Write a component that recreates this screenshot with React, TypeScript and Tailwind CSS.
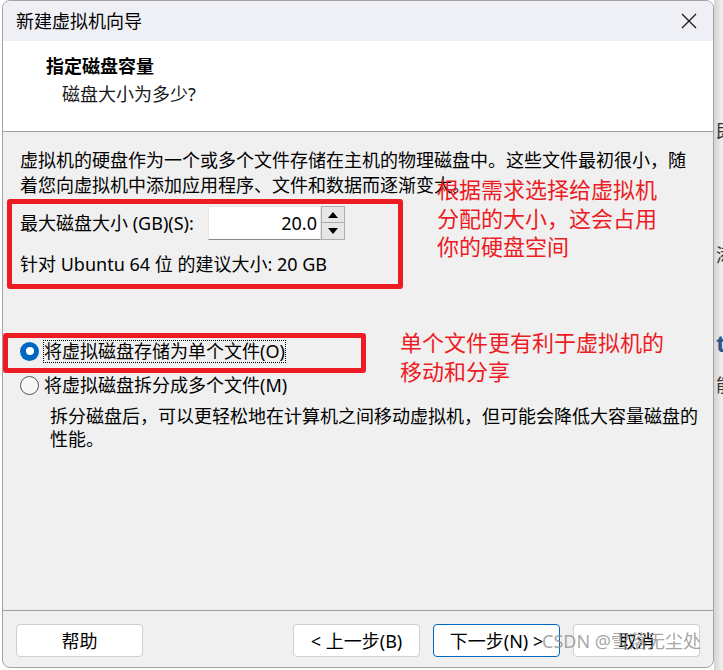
import React from 'react';

const WizardButton = ({ label, primary }: { label: string; primary?: boolean }) => (
  <button
    className={
      primary
        ? 'w-[127px] h-[33px] rounded-[4px] bg-white border border-[#0067c0] text-[18px] leading-[24px] text-black'
        : 'w-[127px] h-[33px] rounded-[4px] bg-white border border-[#cfcfcf] text-[18px] leading-[24px] text-black'
    }
  >
    {label}
  </button>
);

const App = () => {
  return (
    <div className="w-[723px] h-[670px] bg-white flex overflow-hidden font-['Noto_Sans','Noto_Sans_CJK_SC',sans-serif] text-black">
      <div className="w-[2px] shrink-0" />

      {/* dialog */}
      <div className="w-[712px] h-[668px] shrink-0 border border-[#a3a3a3] rounded-[8px] overflow-hidden flex flex-col bg-[#f0f0f0]">
        {/* title bar */}
        <div className="h-[40px] shrink-0 bg-[#eff0f5] flex items-center justify-between pl-[13px] pr-[16px]">
          <span className="text-[18px] leading-[24px]">新建虚拟机向导</span>
          <svg width="16" height="16" viewBox="0 0 16 16">
            <path d="M1 1 L15 15 M15 1 L1 15" stroke="#1a1a1a" strokeWidth="1.3" fill="none" />
          </svg>
        </div>

        {/* header */}
        <div className="h-[91px] shrink-0 bg-white border-b border-[#a0a0a0] pl-[43px] pt-[13px]">
          <div className="text-[18px] leading-[24px] font-bold">指定磁盘容量</div>
          <div className="text-[18px] leading-[24px] mt-[4px] ml-[16px] text-[#1a1a1a]">磁盘大小为多少?</div>
        </div>

        {/* body */}
        <div className="flex-1 pl-[17px] pt-[16px] text-[18px]">
          <p className="leading-[25px] whitespace-nowrap">
            虚拟机的硬盘作为一个或多个文件存储在主机的物理磁盘中。这些文件最初很小，随
            <br />
            着您向虚拟机中添加应用程序、文件和数据而逐渐变大。
          </p>

          <div className="relative mt-[8px] w-[380px]">
            <div className="absolute left-[-13px] top-[-7px] w-[396px] h-[90px] border-[5px] border-[#ed1c24] rounded-[3px]" />
            <div className="absolute left-[417px] top-[-32px] w-[260px] text-[22px] leading-[28.5px] text-[#ed1c24] font-['Noto_Sans_CJK_SC',sans-serif] whitespace-nowrap">
              根据需求选择给虚拟机
              <br />
              分配的大小，这会占用
              <br />
              你的硬盘空间
            </div>

            <div className="flex items-center h-[34px]">
              <span className="w-[188px] leading-[24px]">最大磁盘大小 (GB)(S):</span>
              <div className="w-[113px] h-[34px] bg-white border border-[#e6e6e6] border-b-[#8a8a8a] flex items-center justify-end pr-[3px] leading-[24px]">
                20.0
              </div>
              <div className="w-[24px] h-[34px] flex flex-col">
                <div className="h-[17px] bg-[#e6e6e6] border border-[#adadad] flex items-center justify-center">
                  <svg width="10" height="6" viewBox="0 0 10 6">
                    <path d="M5 0 L10 6 L0 6 Z" fill="#000" />
                  </svg>
                </div>
                <div className="h-[17px] bg-[#e6e6e6] border border-t-0 border-[#adadad] flex items-center justify-center">
                  <svg width="10" height="6" viewBox="0 0 10 6">
                    <path d="M0 0 L10 0 L5 6 Z" fill="#000" />
                  </svg>
                </div>
              </div>
            </div>
            <div className="mt-[12px] leading-[24px] whitespace-nowrap">针对 Ubuntu 64 位 的建议大小: 20 GB</div>
          </div>

          <div className="relative mt-[63px] flex items-center h-[24px]">
            <div className="absolute left-[-17px] top-[-6px] w-[363px] h-[40px] border-[5px] border-[#ed1c24] rounded-[3px]" />
            <div className="absolute left-[380px] top-[-12px] text-[22px] leading-[29px] text-[#ed1c24] font-['Noto_Sans_CJK_SC',sans-serif] whitespace-nowrap">
              单个文件更有利于虚拟机的
              <br />
              移动和分享
            </div>
            <div className="w-[19px] h-[19px] rounded-full bg-[#0067c0] flex items-center justify-center">
              <div className="w-[8px] h-[8px] rounded-full bg-white" />
            </div>
            <span className="ml-[5px] leading-[21px] outline outline-1 outline-dotted outline-black">将虚拟磁盘存储为单个文件(O)</span>
          </div>

          <div className="mt-[10px] flex items-center h-[24px]">
            <div className="w-[19px] h-[19px] rounded-full bg-[#f7f7f7] border border-[#555555]" />
            <span className="ml-[5px] leading-[24px]">将虚拟磁盘拆分成多个文件(M)</span>
          </div>

          <p className="mt-[8px] ml-[30px] leading-[23px] whitespace-nowrap">
            拆分磁盘后，可以更轻松地在计算机之间移动虚拟机，但可能会降低大容量磁盘的
            <br />
            性能。
          </p>
        </div>

        {/* footer */}
        <div className="relative h-[57px] shrink-0 border-t border-[#a0a0a0] pt-[13px] pl-[13px] pr-[13px] flex justify-between">
          <WizardButton label="帮助" />
          <div className="flex gap-[13px]">
            <WizardButton label="< 上一步(B)" />
            <WizardButton label="下一步(N) >" primary />
            <WizardButton label="取消" />
          </div>
          <span className="absolute left-[539px] top-[18px] text-[18px] leading-[24px] text-[#8f8f8f]/80 whitespace-nowrap">
            CSDN @雪落无尘处
          </span>
        </div>
      </div>

      {/* window behind */}
      <div className="w-[9px] shrink-0 h-full overflow-hidden bg-gradient-to-r from-[#d4d4d4] to-[#f2f2f2] flex flex-col pl-[2px] text-[18px] whitespace-nowrap">
        <span className="mt-[120px] h-[22px] leading-[22px] text-[#333333]">即将</span>
        <span className="mt-[102px] h-[22px] leading-[22px] text-[#333333]">添加</span>
        <span className="mt-[62px] h-[30px] leading-[30px] text-[24px] font-bold text-[#2a5a8c]">tab</span>
        <span className="mt-[16px] h-[22px] leading-[22px] text-[#333333]">能</span>
      </div>
    </div>
  );
};

export default App;
